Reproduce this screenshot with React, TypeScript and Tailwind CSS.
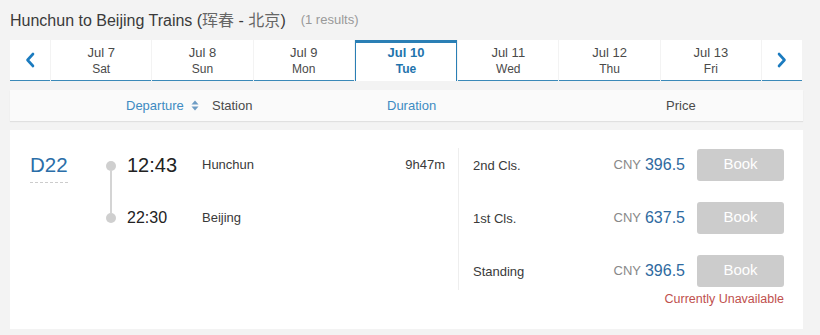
import React from 'react';

const days = [
  { d: 'Jul 7', w: 'Sat' },
  { d: 'Jul 8', w: 'Sun' },
  { d: 'Jul 9', w: 'Mon' },
  { d: 'Jul 10', w: 'Tue', active: true },
  { d: 'Jul 11', w: 'Wed' },
  { d: 'Jul 12', w: 'Thu' },
  { d: 'Jul 13', w: 'Fri' },
];

const seats = [
  { name: '2nd Cls.', price: '396.5' },
  { name: '1st Cls.', price: '637.5' },
  { name: 'Standing', price: '396.5' },
];

const Chevron = ({ dir }: { dir: 'left' | 'right' }) => (
  <svg width="10" height="16" viewBox="0 0 10 16" fill="none">
    <path
      d={dir === 'left' ? 'M8 2 L2.5 8 L8 14' : 'M2 2 L7.5 8 L2 14'}
      stroke="#1b7bbf"
      strokeWidth="2.6"
      strokeLinecap="round"
      strokeLinejoin="round"
    />
  </svg>
);

export default function App() {
  return (
    <div className="min-h-screen bg-[#f3f3f3] px-[10px] font-['Liberation_Sans',Arial,sans-serif] text-[#333]">
      <div className="w-[793px]">
        {/* title */}
        <div className="pt-[10px] h-[30px] flex items-center">
          <span className="text-[16px] leading-[20px] text-[#3a3a3a]">
            Hunchun to Beijing Trains (
            <span className="font-['Noto_Sans_CJK_SC',sans-serif] text-[16px] text-[#666]">珲春</span> -{' '}
            <span className="font-['Noto_Sans_CJK_SC',sans-serif] text-[16px] text-[#666]">北京</span>)
          </span>
          <span className="ml-[15px] text-[13px] text-[#999] leading-[20px]">(1 results)</span>
        </div>

        {/* date tabs */}
        <div className="mt-[10px] flex gap-px w-[792px]">
          <div className="w-[40px] h-[41px] bg-white border-b border-[#3a89b8] flex items-center justify-center">
            <Chevron dir="left" />
          </div>
          {days.map((t) =>
            t.active ? (
              <div
                key={t.d}
                className="flex-1 h-[41px] bg-white border-t-[3px] border-x border-[#2a7fb5] pt-[2px] flex flex-col items-center text-[#1f74ad] font-bold"
              >
                <span className="text-[13px] leading-[16px]">{t.d}</span>
                <span className="text-[12px] leading-[16px]">{t.w}</span>
              </div>
            ) : (
              <div key={t.d} className="flex-1 h-[41px] bg-white border-b border-[#3a89b8] pt-[5px] flex flex-col items-center">
                <span className="text-[13px] leading-[16px] text-[#4a4a4a]">{t.d}</span>
                <span className="text-[12px] leading-[16px] text-[#4a4a4a]">{t.w}</span>
              </div>
            )
          )}
          <div className="w-[40px] h-[41px] bg-white border-b border-[#3a89b8] flex items-center justify-center">
            <Chevron dir="right" />
          </div>
        </div>

        {/* header */}
        <div className="mt-[9px] h-[31px] bg-[#fafafa] shadow-[0_1px_1px_rgba(0,0,0,0.08)] flex items-center text-[13px]">
          <div className="w-[116px]" />
          <div className="w-[86px] flex items-center text-[#3e8bc2]">
            Departure
            <svg className="ml-[7px]" width="8" height="11" viewBox="0 0 8 11">
              <path d="M4 0.5 L7.5 4.5 L0.5 4.5 Z" fill="#6e9cc4" />
              <path d="M4 10.5 L7.5 6.5 L0.5 6.5 Z" fill="#6e9cc4" />
            </svg>
          </div>
          <div className="w-[175px] text-[#4a4a4a]">Station</div>
          <div className="w-[279px] text-[#3e8bc2]">Duration</div>
          <div className="text-[#4a4a4a]">Price</div>
        </div>

        {/* result card */}
        <div className="mt-[9px] h-[199px] bg-white flex items-start pt-[8px]">
          <div className="w-[96px] pl-[20px]">
            <span className="mt-[15px] inline-block text-[20.5px] leading-[24px] text-[#2a6ea8] border-b border-dashed border-[#ccc] pb-[5px]">
              D22
            </span>
          </div>

          <div className="w-[10px] pt-[23px] flex flex-col items-center">
            <div className="w-[10px] h-[10px] rounded-full bg-[#cfcfcf]" />
            <div className="w-[2px] h-[42px] bg-[#d4d4d4]" />
            <div className="w-[10px] h-[10px] rounded-full bg-[#cfcfcf]" />
          </div>

          <div className="ml-[11px] flex flex-col">
            <div className="h-[54px] flex items-center">
              <span className="w-[75px] text-[20px] text-[#222]">12:43</span>
              <span className="w-[150px] text-[13px] text-[#3a3a3a]">Hunchun</span>
              <span className="w-[93px] text-right text-[13px] text-[#3a3a3a]">9h47m</span>
            </div>
            <div className="h-[52px] flex items-center">
              <span className="w-[75px] text-[16px] text-[#222]">22:30</span>
              <span className="w-[150px] text-[13px] text-[#3a3a3a]">Beijing</span>
            </div>
          </div>

          <div className="ml-[13px] mt-[10px] w-px h-[142px] bg-[#eee]" />

          <div className="ml-[14px] w-[311px] flex flex-col">
            {seats.map((s) => (
              <div key={s.name} className="h-[53px] flex items-center">
                <span className="flex-1 pt-[3px] text-[13px] text-[#3a3a3a]">{s.name}</span>
                <span className="text-[13px] text-[#888]">CNY</span>
                <span className="ml-[4px] text-[16px] text-[#2e6aa0]">{s.price}</span>
                <button className="ml-[12px] w-[87px] h-[32px] rounded-[3px] bg-[#cccccc] text-white text-[15px]">
                  Book
                </button>
              </div>
            ))}
            <div className="-mt-[5px] text-right text-[12.5px] leading-[14px] text-[#c0504d]">Currently Unavailable</div>
          </div>
        </div>
      </div>
    </div>
  );
}
